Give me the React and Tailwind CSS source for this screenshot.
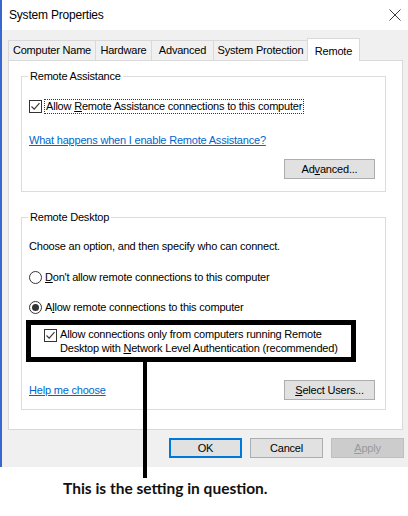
import React from 'react';

const ui = { fontFamily: '"Liberation Sans", Arial, sans-serif' };

const CheckBox = ({ checked }) => (
  <svg width="13" height="13" viewBox="0 0 13 13" className="shrink-0">
    <rect x="0.5" y="0.5" width="12" height="12" fill="#fff" stroke="#333" />
    {checked && <path d="M2.5 6.5 L5.2 9.2 L10.5 3.2" fill="none" stroke="#333" strokeWidth="1.1" />}
  </svg>
);

const Radio = ({ checked }) => (
  <svg width="13" height="13" viewBox="0 0 13 13" className="shrink-0">
    <circle cx="6.5" cy="6.5" r="6" fill="#fff" stroke="#333" />
    {checked && <circle cx="6.5" cy="6.5" r="3.5" fill="#333" />}
  </svg>
);

const buttonStyles = {
  normal: 'border border-[#adadad] bg-[#e1e1e1] text-black',
  primary: 'border-2 border-[#0078d7] bg-[#e1e1e1] text-black',
  disabled: 'border border-[#bfbfbf] bg-[#cccccc] text-[#9a9a9a]',
};

const Button = ({ children, variant = 'normal', className = '' }) => (
  <button className={`h-[20px] text-[11px] leading-none ${buttonStyles[variant]} ${className}`}>
    {children}
  </button>
);

const tabs = [
  { label: 'Computer Name', w: 'w-[88px]' },
  { label: 'Hardware', w: 'w-[57px]' },
  { label: 'Advanced', w: 'w-[63px]' },
  { label: 'System Protection', w: 'w-[95px]' },
];

const App = () => {
  return (
    <div className="relative w-[408px] h-[516px] bg-white overflow-hidden text-black tracking-[-0.2px]" style={ui}>
      {/* Window */}
      <div className="flex flex-col h-[467px] border-l-2 border-[#3a66d0]">
        {/* Title bar */}
        <div className="h-[30px] flex items-center justify-between bg-white pl-[7px] pr-[6px]">
          <span className="text-[12px]">System Properties</span>
          <svg width="12" height="12" viewBox="0 0 12 12" className="mr-[1px]">
            <path d="M0.5 0.5 L11.5 11.5 M11.5 0.5 L0.5 11.5" stroke="#222" strokeWidth="0.9" />
          </svg>
        </div>

        {/* Body */}
        <div className="flex-1 flex flex-col bg-[#f0f0f0] pl-[6px] pr-[4px]">
          {/* Tabs */}
          <div className="flex items-end h-[30px] pt-[8px]">
            {tabs.map((t) => (
              <div
                key={t.label}
                className={`${t.w} h-[20px] -mr-[1px] flex items-center justify-center border border-b-0 border-[#d9d9d9] bg-[#f0f0f0] text-[11px]`}
              >
                {t.label}
              </div>
            ))}
            <div className="w-[53px] h-[23px] flex items-start justify-center pt-[4px] border border-b-0 border-[#d9d9d9] bg-white text-[11px] relative z-10 -mb-[1px]">
              Remote
            </div>
          </div>

          {/* Panel */}
          <div className="h-[370px] mr-[1px] border border-[#d9d9d9] bg-white pl-[12px] pr-[16px] pt-[7px]">
            <fieldset className="border border-[#dcdcdc] pb-[12px]">
              <legend className="ml-[6px] px-[2px] text-[11px] leading-[16px]">Remote Assistance</legend>
              <div className="flex flex-col">
                <div className="flex items-center mt-[15px] ml-[7px] h-[15px]">
                  <CheckBox checked />
                  <span className="ml-[2px] px-[1px] border border-dotted border-[#333] text-[11px] leading-[13px]">
                    Allow <u>R</u>emote Assistance connections to this computer
                  </span>
                </div>
                <a className="mt-[18px] ml-[7px] text-[11px] leading-[16px] text-[#0066cc] underline self-start">
                  What happens when I enable Remote Assistance?
                </a>
                <Button className="mt-[11px] mr-[10px] self-end w-[91px]">
                  Ad<u>v</u>anced...
                </Button>
              </div>
            </fieldset>

            <fieldset className="mt-[17px] border border-[#dcdcdc] pb-[9px]">
              <legend className="ml-[6px] px-[2px] text-[11px] leading-[16px]">Remote Desktop</legend>
              <div className="flex flex-col">
                <div className="mt-[13px] ml-[7px] text-[11px] leading-[16px]">
                  Choose an option, and then specify who can connect.
                </div>
                <div className="flex items-center mt-[15px] ml-[7px] h-[16px] text-[11px]">
                  <Radio />
                  <span className="ml-[3px]"><u>D</u>on't allow remote connections to this computer</span>
                </div>
                <div className="flex items-center mt-[14px] ml-[7px] h-[16px] text-[11px]">
                  <Radio checked />
                  <span className="ml-[3px]">A<u>l</u>low remote connections to this computer</span>
                </div>

                {/* Highlighted setting */}
                <div className="mt-[5px] ml-[4px] w-[330px] h-[42px] border-[5px] border-black flex items-start pl-[13px] pt-[2px]">
                  <div className="mt-[2px]"><CheckBox checked /></div>
                  <div className="ml-[3px] text-[11px] leading-[14px]">
                    Allow connections only from computers running Remote<br />
                    Desktop with <u>N</u>etwork Level Authentication (recommended)
                  </div>
                </div>

                <div className="mt-[18px] flex items-center justify-between ml-[7px] mr-[10px]">
                  <a className="text-[11px] text-[#0066cc] underline">Help me choose</a>
                  <Button className="w-[91px]"><u>S</u>elect Users...</Button>
                </div>
              </div>
            </fieldset>
          </div>

          {/* Dialog buttons */}
          <div className="flex justify-end gap-[8px] mt-[8px]">
            <Button variant="primary" className="w-[73px]">OK</Button>
            <Button className="w-[73px]">Cancel</Button>
            <Button variant="disabled" className="w-[73px]"><u>A</u>pply</Button>
          </div>
        </div>
      </div>

      {/* Annotation pointer */}
      <div className="absolute left-[143px] top-[362px] w-[4px] h-[116px] bg-black" />
      <div
        className="pl-[63px] mt-[11px] text-[15.5px] leading-[20px] font-bold tracking-normal text-[#111]"
        style={{ fontFamily: 'Lato, "Open Sans", sans-serif' }}
      >
        This is the setting in question.
      </div>
    </div>
  );
};

export default App;
